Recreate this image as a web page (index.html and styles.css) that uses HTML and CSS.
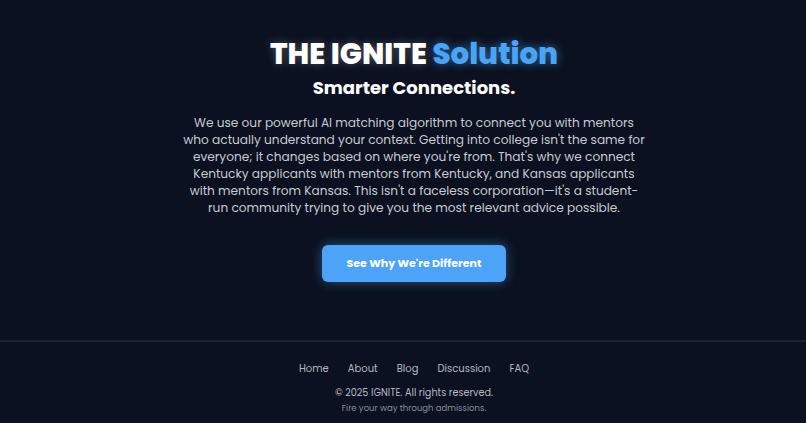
FILE: index.html
```html
<!DOCTYPE html>
<html lang="en">
<head>
<meta charset="utf-8">
<title>IGNITE Solution</title>
<link rel="stylesheet" href="styles.css">
</head>
<body>
<main class="hero">
  <h1 class="title">THE IGNITE <span class="accent">Solution</span></h1>
  <h2 class="subtitle">Smarter Connections.</h2>
  <p class="lead">We use our powerful AI matching algorithm to connect you with mentors who actually understand your context. Getting into college isn't the same for everyone; it changes based on where you're from. That's why we connect Kentucky applicants with mentors from Kentucky, and Kansas applicants with mentors from Kansas. This isn't a faceless corporation—it's a student-run community trying to give you the most relevant advice possible.</p>
  <a class="cta" href="#">See Why We're Different</a>
</main>
<footer class="footer">
  <nav class="links">
    <a href="#">Home</a>
    <a href="#">About</a>
    <a href="#">Blog</a>
    <a href="#">Discussion</a>
    <a href="#">FAQ</a>
  </nav>
  <p class="copy">© 2025 IGNITE. All rights reserved.</p>
  <p class="tag">Fire your way through admissions.</p>
</footer>
</body>
</html>
```
FILE: styles.css
```css
* { box-sizing: border-box; }
html, body {
  margin: 0;
  padding: 0;
  background: #0b1120;
  height: 100%;
}
body {
  font-family: Poppins, "Inter", "Noto Sans", "DejaVu Sans", sans-serif;
  color: #ffffff;
  display: flex;
  flex-direction: column;
  overflow: hidden;
}
.hero {
  display: flex;
  flex-direction: column;
  align-items: center;
  padding-top: 36px;
  padding-left: 22px;
  height: 340px;
}
.title {
  margin: 0;
  font-size: 29.2px;
  font-weight: 800;
  line-height: 36px;
  text-shadow: 0 0 8px rgba(255,255,255,0.25);
}
.accent {
  color: #4aa3f5;
  text-shadow: 0 0 10px rgba(74,163,245,0.6);
}
.subtitle {
  margin: 0;
  margin-top: 3px;
  font-size: 18px;
  font-weight: 700;
  line-height: 26px;
}
.lead {
  margin: 13px 0 0;
  width: 464px;
  text-align: center;
  font-size: 12.15px;
  line-height: 17px;
  color: #c6cad2;
}
.cta {
  margin-top: 29px;
  width: 184px;
  height: 37px;
  display: flex;
  align-items: center;
  justify-content: center;
  background: #4da3f7;
  border-radius: 6px;
  color: #ffffff;
  font-size: 11px;
  font-weight: 700;
  text-decoration: none;
  box-shadow: 0 0 12px rgba(77,163,247,0.45);
}
.footer {
  border-top: 2px solid #192133;
  display: flex;
  flex-direction: column;
  align-items: center;
  padding-top: 19px;
  padding-left: 22px;
}
.links {
  display: flex;
  gap: 19px;
}
.links a {
  color: #b4bac4;
  font-size: 10px;
  text-decoration: none;
  line-height: 16px;
}
.copy {
  margin: 8px 0 0;
  font-size: 9.7px;
  line-height: 16px;
  color: #b4bac4;
}
.tag {
  margin: 0;
  font-size: 8.5px;
  line-height: 14px;
  color: #868d99;
}
```
